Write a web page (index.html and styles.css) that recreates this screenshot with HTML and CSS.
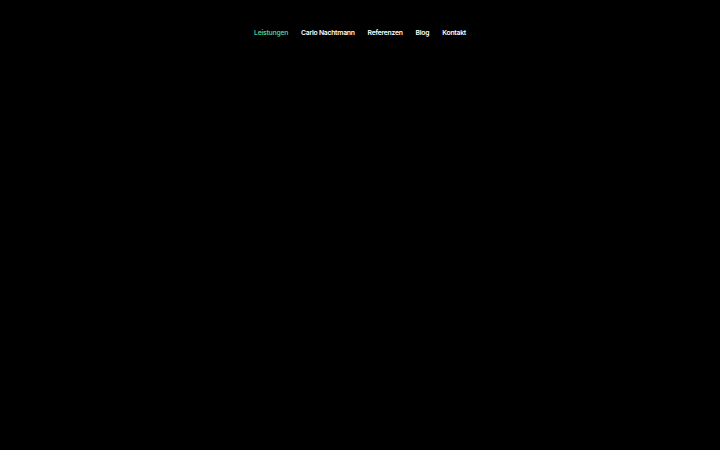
FILE: index.html
```html
<!DOCTYPE html>
<html lang="de">
<head>
<meta charset="utf-8">
<link rel="stylesheet" href="styles.css">
</head>
<body>
<header class="header">
  <nav class="nav">
    <a class="nav-link active" href="#">Leistungen</a>
    <a class="nav-link" href="#">Carlo Nachtmann</a>
    <a class="nav-link" href="#">Referenzen</a>
    <a class="nav-link" href="#">Blog</a>
    <a class="nav-link" href="#">Kontakt</a>
  </nav>
</header>
</body>
</html>
```
FILE: styles.css
```css
html, body {
  margin: 0;
  padding: 0;
  background: #000;
  height: 100%;
}
body {
  font-family: "Inter", "Noto Sans", sans-serif;
}
.header {
  display: flex;
  justify-content: center;
  padding-top: 26px;
}
.nav {
  display: flex;
  gap: 13px;
}
.nav-link {
  color: #fff;
  text-decoration: none;
  font-size: 6.8px;
  font-weight: 600;
  letter-spacing: -0.25px;
  line-height: 13px;
}
.nav-link.active {
  color: #45c99a;
}
```
